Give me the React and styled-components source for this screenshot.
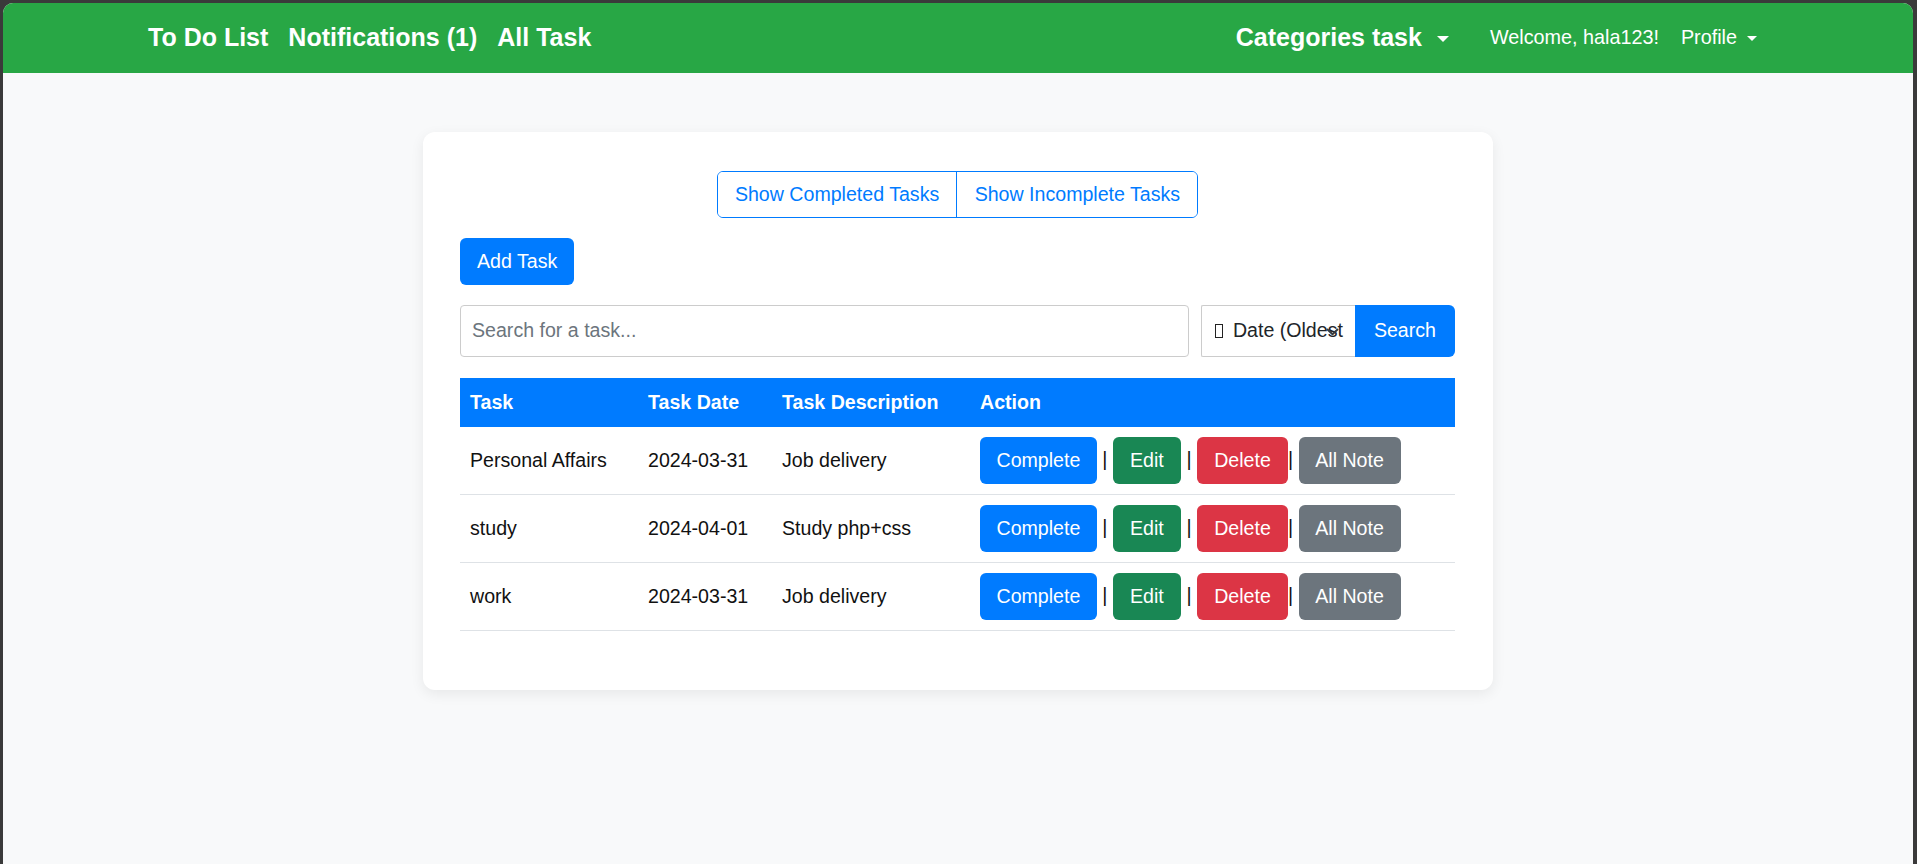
import React from "react";
import styled, { createGlobalStyle } from "styled-components";

const GlobalStyle = createGlobalStyle`
  html, body { margin: 0; padding: 0; }
  body {
    background: #3a3a3a;
    font-family: "Liberation Sans", Arial, sans-serif;
    color: #212529;
  }
  * { box-sizing: border-box; }
`;

const Window = styled.div`
  margin: 3px 4px 0 3px;
  min-height: calc(100vh - 3px);
  background: #f8f9fa;
  border-radius: 10px 10px 0 0;
  overflow: hidden;
`;

const Navbar = styled.nav`
  background: #28a745;
  height: 69.5px;
  display: flex;
  justify-content: center;
`;

const NavContainer = styled.div`
  width: 1650px;
  padding: 0 15px;
  display: flex;
  align-items: center;
  justify-content: space-between;
`;

const NavGroup = styled.div`
  display: flex;
  align-items: center;
  gap: ${(p) => p.$gap ?? 20}px;
`;

const NavBrand = styled.a`
  color: #fff;
  font-weight: 700;
  font-size: 25px;
  text-decoration: none;
  white-space: nowrap;
  display: inline-flex;
  align-items: center;
  ${(p) =>
    p.$caret &&
    `&::after {
      content: "";
      margin-left: 15px;
      border-top: 6.5px solid #fff;
      border-left: 6.5px solid transparent;
      border-right: 6.5px solid transparent;
      margin-top: 2px;
    }`}
`;

const NavText = styled.span`
  color: #fff;
  font-size: 19.8px;
  white-space: nowrap;
  display: inline-flex;
  align-items: center;
  ${(p) =>
    p.$caret &&
    `&::after {
      content: "";
      margin-left: 10px;
      border-top: 5.5px solid #fff;
      border-left: 5.5px solid transparent;
      border-right: 5.5px solid transparent;
      margin-top: 1px;
    }`}
`;

const Main = styled.main`
  display: flex;
  justify-content: center;
  padding-top: 59.5px;
`;

const Card = styled.section`
  width: 1070px;
  background: #fff;
  border-radius: 12px;
  box-shadow: 0 4px 14px rgba(0, 0, 0, 0.07);
  padding: 39px 38px 40px 37px;
  display: flex;
  flex-direction: column;
`;

const ToggleRow = styled.div`
  display: flex;
  justify-content: center;
`;

const ToggleGroup = styled.div`
  display: inline-flex;
  border: 1.25px solid #007bff;
  border-radius: 6px;
  overflow: hidden;
`;

const ToggleButton = styled.button`
  height: 45px;
  padding: 0 17.2px;
  background: #fff;
  color: #007bff;
  border: none;
  font-family: inherit;
  font-size: 19.6px;
  & + & { border-left: 1.25px solid #007bff; }
`;

const Button = styled.button`
  height: 47px;
  padding: 0 ${(p) => p.$px || 15}px;
  border: none;
  border-radius: 6px;
  background: ${(p) => p.$bg};
  color: #fff;
  font-family: inherit;
  font-size: 19.6px;
  white-space: nowrap;
  vertical-align: middle;
`;

const AddRow = styled.div`
  margin-top: 20px;
`;

const SearchRow = styled.div`
  margin-top: 19.5px;
  display: flex;
  gap: 12px;
  height: 52px;
`;

const SearchInput = styled.input`
  flex: 1;
  height: 52px;
  border: 1px solid #ccc;
  border-radius: 4px;
  padding: 0 11px;
  font-family: inherit;
  font-size: 19.6px;
  color: #212529;
  &::placeholder { color: #6c757d; }
`;

const InputGroup = styled.div`
  display: flex;
  height: 52px;
`;

const SortSelect = styled.div`
  position: relative;
  width: 154px;
  border: 1px solid #ccc;
  border-right: none;
  border-radius: 2px 0 0 2px;
  padding: 0 10px 0 13px;
  display: flex;
  align-items: center;
  font-size: 19.6px;
  color: #212529;
  background: #fff;
  overflow: hidden;
`;

const SelectText = styled.span`
  white-space: nowrap;
  overflow: hidden;
  flex: 1;
  display: flex;
  align-items: center;
`;

const Tofu = styled.span`
  display: inline-block;
  flex: none;
  width: 8px;
  height: 14px;
  border: 1px solid #222;
  margin-right: 10px;
`;

const Chevron = styled.svg`
  position: absolute;
  right: 16px;
  top: 50%;
  margin-top: -3px;
`;

const SearchButton = styled(Button)`
  height: 52px;
  border-radius: 0 6px 6px 0;
`;

const Table = styled.table`
  margin-top: 21px;
  margin-bottom: 19px;
  width: 100%;
  border-collapse: collapse;
  table-layout: fixed;
  font-size: 19.6px;
`;

const HeadCell = styled.th`
  background: #007bff;
  color: #fff;
  text-align: left;
  font-weight: 700;
  height: 49px;
  padding: 0 10px;
`;

const Row = styled.tr`
  border-bottom: 1px solid #dee2e6;
`;

const Cell = styled.td`
  height: 68px;
  padding: 0 10px;
  color: #111;
  white-space: nowrap;
`;

const Sep = styled.span`
  color: #111;
`;

const tasks = [
  { name: "Personal Affairs", date: "2024-03-31", desc: "Job delivery" },
  { name: "study", date: "2024-04-01", desc: "Study php+css" },
  { name: "work", date: "2024-03-31", desc: "Job delivery" },
];

export default function App() {
  return (
    <>
      <GlobalStyle />
      <Window>
        <Navbar>
          <NavContainer>
            <NavGroup $gap={20}>
              <NavBrand href="#">To Do List</NavBrand>
              <NavBrand href="#">Notifications (1)</NavBrand>
              <NavBrand href="#">All Task</NavBrand>
            </NavGroup>
            <NavGroup $gap={0}>
              <NavBrand href="#" $caret style={{ marginRight: 41 }}>
                Categories task
              </NavBrand>
              <NavText style={{ marginRight: 22 }}>Welcome, hala123!</NavText>
              <NavText $caret style={{ marginRight: 11 }}>Profile</NavText>
            </NavGroup>
          </NavContainer>
        </Navbar>
        <Main>
          <Card>
            <ToggleRow>
              <ToggleGroup>
                <ToggleButton>Show Completed Tasks</ToggleButton>
                <ToggleButton>Show Incomplete Tasks</ToggleButton>
              </ToggleGroup>
            </ToggleRow>
            <AddRow>
              <Button $bg="#007bff" $px={17}>Add Task</Button>
            </AddRow>
            <SearchRow>
              <SearchInput placeholder="Search for a task..." />
              <InputGroup>
                <SortSelect>
                  <SelectText>
                    <Tofu />
                    Date (Oldest first)
                  </SelectText>
                  <Chevron width="13" height="8" viewBox="0 0 13 8">
                    <path d="M1.5 1.5 L6.5 6.2 L11.5 1.5" fill="none" stroke="#343a40" strokeWidth="2" strokeLinecap="round" strokeLinejoin="round" />
                  </Chevron>
                </SortSelect>
                <SearchButton $bg="#007bff" $px={19}>Search</SearchButton>
              </InputGroup>
            </SearchRow>
            <Table>
              <colgroup>
                <col style={{ width: 178 }} />
                <col style={{ width: 134 }} />
                <col style={{ width: 198 }} />
                <col />
              </colgroup>
              <thead>
                <tr>
                  <HeadCell>Task</HeadCell>
                  <HeadCell>Task Date</HeadCell>
                  <HeadCell>Task Description</HeadCell>
                  <HeadCell>Action</HeadCell>
                </tr>
              </thead>
              <tbody>
                {tasks.map((t, i) => (
                  <Row key={i}>
                    <Cell>{t.name}</Cell>
                    <Cell>{t.date}</Cell>
                    <Cell>{t.desc}</Cell>
                    <Cell>
                      <Button $bg="#007bff" $px={16.5}>Complete</Button>
                      <Sep> | </Sep>
                      <Button $bg="#198754" $px={17.2}>Edit</Button>
                      <Sep> | </Sep>
                      <Button $bg="#dc3545" $px={17.2}>Delete</Button>
                      <Sep>| </Sep>
                      <Button $bg="#6c757d" $px={16.7}>All Note</Button>
                    </Cell>
                  </Row>
                ))}
              </tbody>
            </Table>
          </Card>
        </Main>
      </Window>
    </>
  );
}
